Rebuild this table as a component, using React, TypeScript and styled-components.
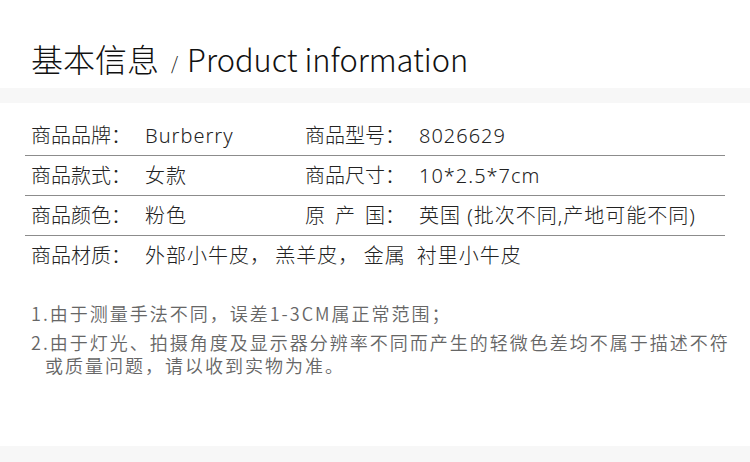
import styled, { createGlobalStyle } from "styled-components";

const GlobalStyle = createGlobalStyle`
  html, body {
    margin: 0;
    padding: 0;
    background: #ffffff;
  }
  body {
    font-family: "Noto Sans CJK SC", "Noto Sans", sans-serif;
    color: #333;
  }
`;

interface InfoItem {
  label: string;
  value: string;
}

const rows: InfoItem[][] = [
  [
    { label: "商品品牌：", value: "Burberry" },
    { label: "商品型号：", value: "8026629" },
  ],
  [
    { label: "商品款式：", value: "女款" },
    { label: "商品尺寸：", value: "10*2.5*7cm" },
  ],
  [
    { label: "商品颜色：", value: "粉色" },
    { label: "原\u2002产\u2002国：", value: "英国 (批次不同,产地可能不同)" },
  ],
  [
    {
      label: "商品材质：",
      value: "外部小牛皮，\u2009羔羊皮，\u2009金属\u2002衬里小牛皮",
    },
  ],
];

const notes = [
  "1.由于测量手法不同，误差1-3CM属正常范围；",
  "2.由于灯光、拍摄角度及显示器分辨率不同而产生的轻微色差均不属于描述不符或质量问题，请以收到实物为准。",
];

export default function App() {
  return (
    <Page>
      <GlobalStyle />
      <Header>
        <TitleCn>基本信息</TitleCn>
        <Slash>/</Slash>
        <TitleEn>Product information</TitleEn>
      </Header>
      <Band />
      <Table>
        {rows.map((row, i) => (
          <Row key={i}>
            {row.map((item) => (
              <Cell key={item.label} $wide={row.length === 1}>
                <Label>{item.label}</Label>
                <Value>{item.value}</Value>
              </Cell>
            ))}
          </Row>
        ))}
      </Table>
      <Notes>
        {notes.map((n) => (
          <Note key={n}>{n}</Note>
        ))}
      </Notes>
      <Band $grow />
    </Page>
  );
}

const Page = styled.div`
  width: 750px;
  height: 462px;
  display: flex;
  flex-direction: column;
  overflow: hidden;
`;

const Header = styled.div`
  height: 88px;
  display: flex;
  align-items: baseline;
  padding: 38px 0 0 31px;
  box-sizing: border-box;
  color: #111;
  font-weight: 300;
`;

const TitleCn = styled.span`
  font-size: 32px;
  line-height: 40px;
`;

const Slash = styled.span`
  font-size: 18px;
  margin: 0 9px 0 12px;
  position: relative;
  top: -2px;
`;

const TitleEn = styled.span`
  font-size: 30.8px;
  line-height: 40px;
`;

const Band = styled.div<{ $grow?: boolean }>`
  background: #f7f7f7;
  height: 15px;
  flex: ${(p) => (p.$grow ? "1" : "none")};
`;

const Table = styled.div`
  margin: 13px 25px 0;
`;

const Row = styled.div`
  display: flex;
  height: 40px;
  align-items: center;
  box-sizing: border-box;
  border-bottom: 1px solid #8c8c8c;

  &:last-child {
    border-bottom: none;
  }
`;

const Cell = styled.div<{ $wide?: boolean }>`
  display: flex;
  align-items: center;
  box-sizing: border-box;
  padding-left: 6px;
  width: ${(p) => (p.$wide ? "auto" : "274px")};
  font-family: "Noto Sans", "Noto Sans CJK SC", sans-serif;
  font-size: 20px;
  font-weight: 300;
  color: #222;
  line-height: 28px;
  white-space: nowrap;
`;

const Label = styled.span`
  width: 114px;
  flex: none;
`;

const Value = styled.span`
  letter-spacing: 1px;
`;

const Notes = styled.div`
  margin: 26px 0 0 31px;
  width: 714px;
  color: #666;
  font-size: 18px;
  font-weight: 350;
  letter-spacing: 2px;
  line-height: 23px;
  height: 144px;
`;

const Note = styled.p`
  margin: 0 0 6px;
  padding-left: 14px;
  text-indent: -14px;
`;
